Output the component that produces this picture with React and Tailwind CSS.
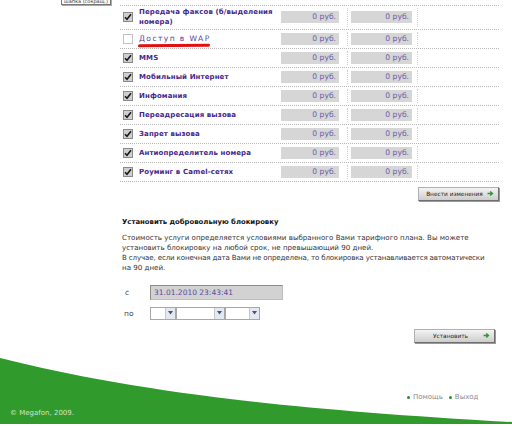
import React from "react";

const rows = [
  { label: "Передача факсов (б/выделения номера)", checked: true, tall: true },
  { label: "Доступ в WAP", checked: false, mark: true },
  { label: "MMS", checked: true },
  { label: "Мобильный Интернет", checked: true },
  { label: "Инфомания", checked: true },
  { label: "Переадресация вызова", checked: true },
  { label: "Запрет вызова", checked: true },
  { label: "Антиопределитель номера", checked: true },
  { label: "Роуминг в Camel-сетях", checked: true },
];

function Check({ checked }) {
  if (!checked)
    return <div className="w-[10px] h-[10px] border border-[#c4c4c4] bg-white shrink-0" />;
  return (
    <div className="w-[10px] h-[10px] border border-[#8a8a8a] bg-[#cfcfcf] shrink-0 flex items-center justify-center">
      <svg width="8" height="8" viewBox="0 0 8 8">
        <path d="M1 4.2 L3 6.3 L7 1.2" fill="none" stroke="#1a1a1a" strokeWidth="1.6" />
      </svg>
    </div>
  );
}

function Price() {
  return (
    <div className="h-[12px] bg-[#d6d6d6] text-right pr-[3px] text-[7.6px] leading-[12px] text-[#6c60a8]">
      0 руб.
    </div>
  );
}

function Btn({ children, w }) {
  return (
    <div
      className={`${w} h-[14px] flex items-center border border-[#b0b0b0] border-b-[#6f6f6f] border-r-[#6f6f6f] bg-gradient-to-b from-[#f4f4f4] to-[#cdcdcd] shadow-[1px_1px_0_#9a9a9a]`}
    >
      <span className="flex-1 text-center text-[5.8px] leading-[12px] text-[#222] pl-[4px] whitespace-nowrap">{children}</span>
      <span className="w-[8px] flex items-center justify-center mr-[4px]">
        <svg width="7" height="7" viewBox="0 0 7 7">
          <path d="M0.5 3.5 H5 M3.2 1.4 L5.5 3.5 L3.2 5.6" fill="none" stroke="#2e9a2e" strokeWidth="1.4" />
        </svg>
      </span>
    </div>
  );
}

function Select({ w }) {
  return (
    <div className={`${w} h-[13px] border border-[#a8a8a8] bg-white flex justify-end`}>
      <div className="w-[10px] h-full bg-[#e4e8f0] border-l border-[#c8c8c8] flex items-center justify-center">
        <svg width="5" height="4" viewBox="0 0 5 4">
          <path d="M0 0 H5 L2.5 3.5 Z" fill="#4a5470" />
        </svg>
      </div>
    </div>
  );
}

export default function App() {
  return (
    <div
      className="w-[512px] h-[426px] bg-white overflow-hidden flex flex-col"
      style={{ fontFamily: '"DejaVu Sans", Verdana, sans-serif' }}
    >
      {/* top clipped button */}
      <div className="h-[5px] relative">
        <div className="absolute left-[61px] top-[-3px] w-[50px] h-[8px] border border-[#777] bg-white shadow-[1px_1px_0_#aaa] text-[5px] leading-[6px] text-[#333] text-center overflow-hidden whitespace-nowrap">
          шапка (сокращ.)
        </div>
      </div>

      <div className="pl-[120px] w-[499px]">
        <div className="border-t border-dotted border-[#b8b8b8]">
          {rows.map((r, i) => (
            <div
              key={i}
              className={`flex items-center border-b border-dotted border-[#b8b8b8] ${r.tall ? "h-[24px]" : "h-[19px]"}`}
            >
              <div className="w-[160px] flex items-center pl-[3px] shrink-0">
                <Check checked={r.checked} />
                <div className="relative ml-[6px] w-[138px]">
                  <div
                    className={
                      r.checked
                        ? "text-[7px] leading-[10px] tracking-[0.1px] font-bold text-[#45278c]"
                        : "text-[7.6px] leading-[10px] tracking-[1.4px] text-[#5a3f9e]"
                    }
                  >
                    {r.label}
                  </div>
                  {r.mark && (
                    <div className="absolute left-[-1px] top-[10px] w-[72px] h-[3px] bg-[#e01010] rounded-full rotate-[-0.6deg]" />
                  )}
                </div>
              </div>
              <div className="w-[68px] shrink-0 self-stretch flex items-center pl-[1px] pr-[8px] border-r border-dotted border-[#d0d0d0] my-[2px]">
                <div className="w-full">
                  <Price />
                </div>
              </div>
              <div className="w-[70px] shrink-0 self-stretch flex items-center pl-[3px] pr-[5px] border-r border-dotted border-[#d0d0d0] my-[2px]">
                <div className="w-full">
                  <Price />
                </div>
              </div>
              <div className="flex-1" />
            </div>
          ))}
        </div>

        <div className="flex justify-end mt-[5px]">
          <Btn w="w-[81px]">Внести изменения</Btn>
        </div>

        <div className="mt-[16px] pl-[2px] text-[6.9px] leading-[10px] font-bold text-[#111]">
          Установить добровольную блокировку
        </div>

        <div className="mt-[6px] pl-[2px] text-[7.1px] leading-[10px] text-[#333] whitespace-nowrap">
          <div>Стоимость услуги определяется условиями выбранного Вами тарифного плана. Вы можете</div>
          <div>установить блокировку на любой срок, не превышающий 90 дней.</div>
          <div className="tracking-[-0.15px]">В случае, если конечная дата Вами не определена, то блокировка устанавливается автоматически</div>
          <div>на 90 дней.</div>
        </div>

        <div className="mt-[12px] flex items-center">
          <div className="w-[30px] pl-[5px] text-[7.5px] text-[#444]">с</div>
          <div className="w-[133px] h-[15px] bg-[#d2d2d2] border border-[#8c8c8c] border-b-[#bdbdbd] border-r-[#bdbdbd] text-[7.5px] leading-[13px] pl-[3px] text-[#5a4a9e]">
            31.01.2010 23:43:41
          </div>
        </div>

        <div className="mt-[7px] flex items-center">
          <div className="w-[30px] pl-[4px] text-[7.5px] text-[#444]">по</div>
          <Select w="w-[26px]" />
          <Select w="w-[49px]" />
          <Select w="w-[35px]" />
        </div>

        <div className="flex justify-end mt-[9px] pr-[4px]">
          <Btn w="w-[81px]">Установить</Btn>
        </div>
      </div>

      {/* footer */}
      <div className="relative h-[86px] mt-auto">
        <svg className="absolute left-0 top-0" width="512" height="86" viewBox="0 0 512 86">
          <path d="M0 15 C120 45 260 65 512 79 L512 81 L0 81 Z" fill="#319a2c" />
          <rect x="0" y="83" width="512" height="1" fill="#bdbdbd" />
        </svg>
        <div className="absolute left-[10px] top-[65px] text-[7px] text-[#cfe8c8]">© Megafon, 2009.</div>
        <div className="absolute left-[407px] top-[49px] flex items-center gap-[6px] text-[7px] text-[#8a8a8a]">
          <span className="flex items-center gap-[3px]">
            <span className="w-[3px] h-[3px] rounded-full bg-[#2e8b2e]" />
            Помощь
          </span>
          <span className="flex items-center gap-[3px]">
            <span className="w-[3px] h-[3px] rounded-full bg-[#2e8b2e]" />
            Выход
          </span>
        </div>
      </div>
    </div>
  );
}
